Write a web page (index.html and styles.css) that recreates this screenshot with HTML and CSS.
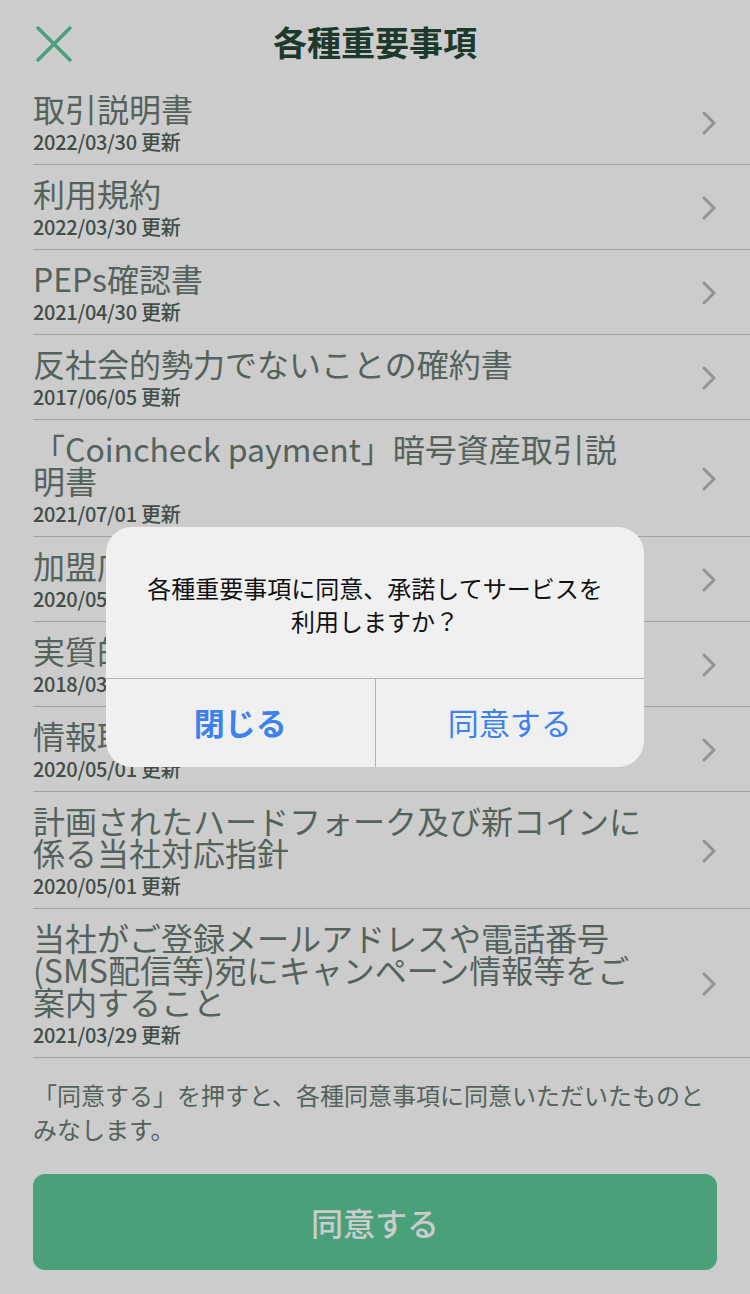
FILE: index.html
```html
<!DOCTYPE html>
<html lang="ja">
<head>
    <meta charset="UTF-8">
    <meta name="viewport" content="width=device-width, initial-scale=1.0">
    <title>各種重要事項</title>
    <link rel="stylesheet" href="styles.css">
</head>
<body>
    <header class="topbar">
        <button class="close-btn" aria-label="閉じる">
            <svg width="36" height="36" viewBox="0 0 36 36">
                <path d="M2 2 L34 34 M34 2 L2 34" stroke="#5cc797" stroke-width="3.4" stroke-linecap="round" fill="none"/>
            </svg>
        </button>
        <h1>各種重要事項</h1>
    </header>

    <ul class="doc-list">
        <li class="doc-item">
            <div class="doc-text">
                <div class="doc-title">取引説明書</div>
                <div class="doc-date">2022/03/30 更新</div>
            </div>
            <svg class="chevron" width="14" height="24" viewBox="0 0 14 24"><polyline points="2,2 12,12 2,22"/></svg>
        </li>
        <li class="doc-item">
            <div class="doc-text">
                <div class="doc-title">利用規約</div>
                <div class="doc-date">2022/03/30 更新</div>
            </div>
            <svg class="chevron" width="14" height="24" viewBox="0 0 14 24"><polyline points="2,2 12,12 2,22"/></svg>
        </li>
        <li class="doc-item">
            <div class="doc-text">
                <div class="doc-title">PEPs確認書</div>
                <div class="doc-date">2021/04/30 更新</div>
            </div>
            <svg class="chevron" width="14" height="24" viewBox="0 0 14 24"><polyline points="2,2 12,12 2,22"/></svg>
        </li>
        <li class="doc-item">
            <div class="doc-text">
                <div class="doc-title">反社会的勢力でないことの確約書</div>
                <div class="doc-date">2017/06/05 更新</div>
            </div>
            <svg class="chevron" width="14" height="24" viewBox="0 0 14 24"><polyline points="2,2 12,12 2,22"/></svg>
        </li>
        <li class="doc-item">
            <div class="doc-text">
                <div class="doc-title">「Coincheck payment」暗号資産取引説明書</div>
                <div class="doc-date">2021/07/01 更新</div>
            </div>
            <svg class="chevron" width="14" height="24" viewBox="0 0 14 24"><polyline points="2,2 12,12 2,22"/></svg>
        </li>
        <li class="doc-item">
            <div class="doc-text">
                <div class="doc-title">加盟店規約</div>
                <div class="doc-date">2020/05/01 更新</div>
            </div>
            <svg class="chevron" width="14" height="24" viewBox="0 0 14 24"><polyline points="2,2 12,12 2,22"/></svg>
        </li>
        <li class="doc-item">
            <div class="doc-text">
                <div class="doc-title">実質的支配者に関する確認書</div>
                <div class="doc-date">2018/03/30 更新</div>
            </div>
            <svg class="chevron" width="14" height="24" viewBox="0 0 14 24"><polyline points="2,2 12,12 2,22"/></svg>
        </li>
        <li class="doc-item">
            <div class="doc-text">
                <div class="doc-title">情報取扱規程</div>
                <div class="doc-date">2020/05/01 更新</div>
            </div>
            <svg class="chevron" width="14" height="24" viewBox="0 0 14 24"><polyline points="2,2 12,12 2,22"/></svg>
        </li>
        <li class="doc-item">
            <div class="doc-text">
                <div class="doc-title">計画されたハードフォーク及び新コインに係る当社対応指針</div>
                <div class="doc-date">2020/05/01 更新</div>
            </div>
            <svg class="chevron" width="14" height="24" viewBox="0 0 14 24"><polyline points="2,2 12,12 2,22"/></svg>
        </li>
        <li class="doc-item">
            <div class="doc-text">
                <div class="doc-title">当社がご登録メールアドレスや電話番号(SMS配信等)宛にキャンペーン情報等をご案内すること</div>
                <div class="doc-date">2021/03/29 更新</div>
            </div>
            <svg class="chevron" width="14" height="24" viewBox="0 0 14 24"><polyline points="2,2 12,12 2,22"/></svg>
        </li>
    </ul>

    <p class="note">「同意する」を押すと、各種同意事項に同意いただいたものとみなします。</p>

    <div class="footer">
        <button class="agree-btn">同意する</button>
    </div>

    <div class="backdrop">
        <div class="alert">
            <p class="alert-message">各種重要事項に同意、承諾してサービスを利用しますか？</p>
            <div class="alert-actions">
                <button class="alert-btn alert-btn-bold">閉じる</button>
                <button class="alert-btn">同意する</button>
            </div>
        </div>
    </div>
</body>
</html>
```

FILE: styles.css
```css
body {
    font-family: "Noto Sans CJK JP", "Noto Sans", sans-serif;
    margin: 0;
    padding: 0;
    background-color: #ffffff;
    width: 750px;
    min-height: 1294px;
    position: relative;
    overflow: hidden;
}
.topbar {
    height: 80px;
    display: flex;
    align-items: center;
    justify-content: center;
    position: relative;
}
.topbar h1 {
    margin: 0;
    font-size: 34px;
    font-weight: 700;
    color: #244838;
    line-height: 1;
    padding-top: 4px;
}
.close-btn {
    position: absolute;
    left: 36px;
    top: 26px;
    width: 36px;
    height: 36px;
    padding: 0;
    border: none;
    background: none;
}
.close-btn svg {
    display: block;
}
.doc-list {
    list-style-type: none;
    margin: 0 0 0 33px;
    padding: 0;
}
.doc-item {
    display: flex;
    align-items: center;
    justify-content: space-between;
    padding: 12px 0 11px;
    border-bottom: 1px solid #c8c8c8;
}
.doc-text {
    width: 612px;
}
.doc-title {
    font-size: 32px;
    line-height: 32px;
    color: #6b7b74;
}
.doc-date {
    font-size: 20px;
    line-height: 22px;
    font-weight: 500;
    color: #52625b;
    margin-top: 7px;
    letter-spacing: -0.3px;
}
.chevron {
    fill: none;
    stroke: #b8b8b8;
    stroke-width: 3;
    stroke-linecap: round;
    stroke-linejoin: round;
    margin-right: 34px;
}
.note {
    margin: 20px 33px 0;
    font-size: 24px;
    line-height: 34px;
    color: #6b7b74;
}
.footer {
    padding: 28px 33px 0;
}
.agree-btn {
    display: block;
    width: 100%;
    height: 96px;
    border: none;
    border-radius: 12px;
    background-color: #5cc898;
    color: #ffffff;
    font-family: inherit;
    font-size: 32px;
    font-weight: 500;
}

/* modal */
.backdrop {
    position: absolute;
    inset: 0;
    z-index: 10;
    background-color: rgba(0, 0, 0, 0.2);
    display: flex;
    justify-content: center;
    align-items: flex-start;
}
.alert {
    margin-top: 527px;
    width: 538px;
    background-color: #f0f0f0;
    border-radius: 26px;
    overflow: hidden;
}
.alert-message {
    margin: 0;
    padding: 44px 36px 41px;
    text-align: center;
    font-size: 24px;
    line-height: 33px;
    color: #111111;
}
.alert-actions {
    display: flex;
    border-top: 1px solid #b4b4b4;
}
.alert-btn {
    flex: 1;
    height: 88px;
    border: none;
    background: none;
    font-family: inherit;
    font-size: 31px;
    color: #3b82f0;
    padding: 0 0 4px;
}
.alert-btn + .alert-btn {
    border-left: 1px solid #b4b4b4;
}
.alert-btn-bold {
    font-weight: 700;
}
```
